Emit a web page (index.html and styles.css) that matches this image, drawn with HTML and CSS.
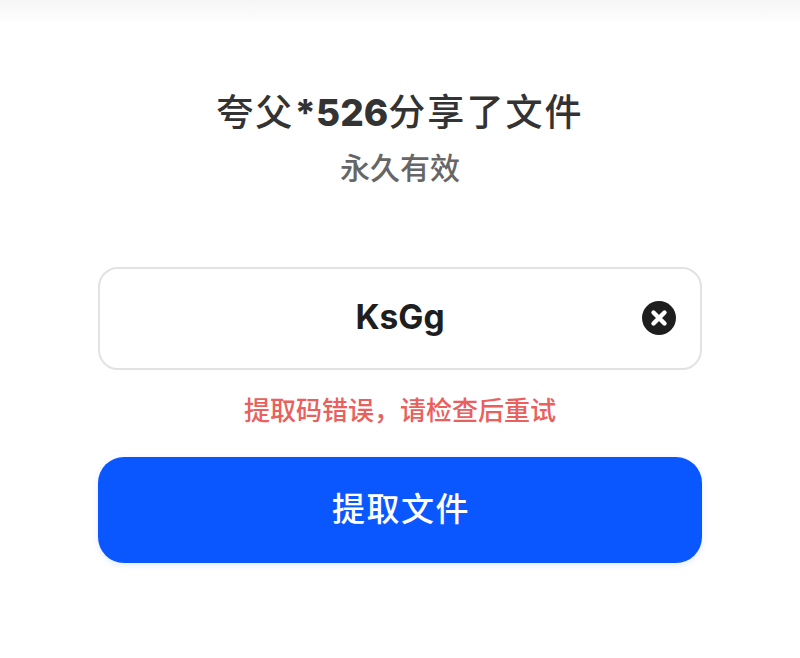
FILE: index.html
```html
<!DOCTYPE html>
<html lang="zh-CN">
  <head>
    <meta charset="utf-8" />
    <title>提取文件</title>
    <link rel="stylesheet" href="styles.css">
  </head>
  <body>
    <div class="top-fade"></div>
    <main class="panel">
      <h1 class="title">夸父<span class="title-mask">*526</span>分享了文件</h1>
      <div class="sub-title">永久有效</div>
      <div class="code-box">
        <span class="code-value">KsGg</span>
        <svg class="clear-icon" viewBox="0 0 34 34" width="34" height="34">
          <circle cx="17" cy="17" r="17" fill="#1e1e1e" />
          <path d="M11.5 11.5L22.5 22.5M22.5 11.5L11.5 22.5" stroke="#fff" stroke-width="4.4" stroke-linecap="round" />
        </svg>
      </div>
      <div class="error-msg">提取码错误，请检查后重试</div>
      <button class="submit-btn" type="button">提取文件</button>
    </main>
  </body>
</html>
```

FILE: styles.css
```css
html, body {
  height: 100%;
  margin: 0;
  padding: 0;
  background-color: #fff;
  font-family: "Inter", "Noto Sans CJK SC", sans-serif;
}
.top-fade {
  height: 24px;
  background: linear-gradient(#f5f5f5, #fff);
}
.panel {
  display: flex;
  flex-direction: column;
  align-items: center;
  padding: 0 98px;
}
.title {
  margin: 62px 0 0 0;
  font-size: 37px;
  line-height: 54px;
  font-weight: 500;
  letter-spacing: 2.1px;
  color: #333;
}
.title-mask {
  font-weight: 800;
  letter-spacing: 0;
}
.sub-title {
  margin-top: 6px;
  font-size: 30px;
  line-height: 44px;
  font-weight: 500;
  color: #666;
}
.code-box {
  box-sizing: border-box;
  width: 100%;
  height: 103px;
  margin-top: 77px;
  padding-bottom: 3px;
  border: 2px solid #e2e2e2;
  border-radius: 20px;
  display: flex;
  align-items: center;
  justify-content: center;
  position: relative;
}
.code-value {
  font-size: 33.5px;
  font-weight: 700;
  color: #1e1e1e;
}
.clear-icon {
  position: absolute;
  right: 24px;
  top: 32px;
}
.error-msg {
  margin-top: 21px;
  font-size: 26px;
  line-height: 40px;
  font-weight: 500;
  color: #e9605c;
}
.submit-btn {
  width: 100%;
  height: 106px;
  margin-top: 26px;
  padding: 0 0 6px 2px;
  border: 0;
  border-radius: 26px;
  background-color: #0b57ff;
  box-shadow: 0 2px 6px rgba(11, 87, 255, .12);
  color: #fff;
  font-family: inherit;
  font-size: 33px;
  font-weight: 500;
  letter-spacing: 1.5px;
}
```
